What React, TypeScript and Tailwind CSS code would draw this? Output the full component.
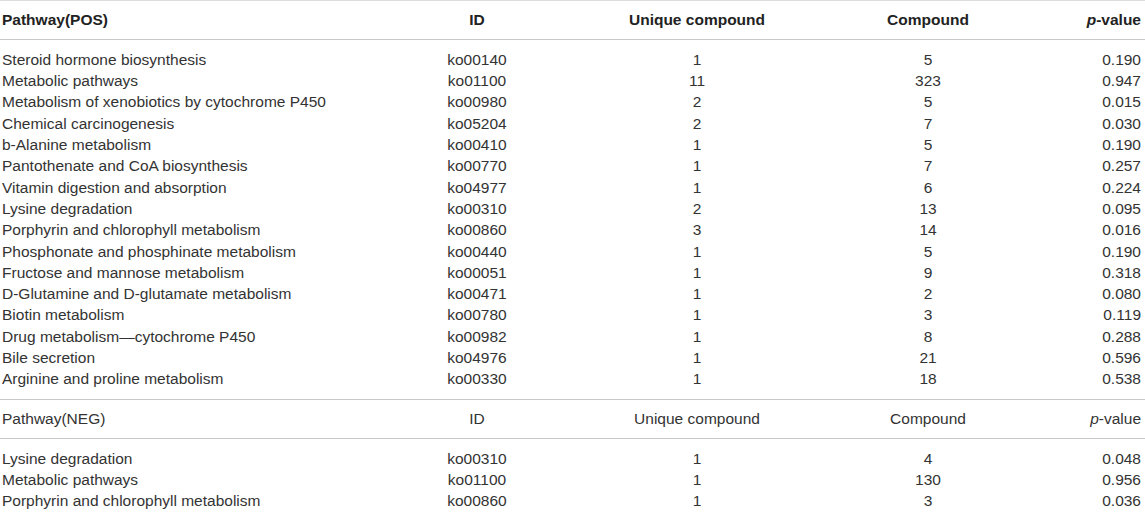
import React from 'react';

type Row = [string, string, string, string, string];

const pos: Row[] = [
  ['Steroid hormone biosynthesis', 'ko00140', '1', '5', '0.190'],
  ['Metabolic pathways', 'ko01100', '11', '323', '0.947'],
  ['Metabolism of xenobiotics by cytochrome P450', 'ko00980', '2', '5', '0.015'],
  ['Chemical carcinogenesis', 'ko05204', '2', '7', '0.030'],
  ['b-Alanine metabolism', 'ko00410', '1', '5', '0.190'],
  ['Pantothenate and CoA biosynthesis', 'ko00770', '1', '7', '0.257'],
  ['Vitamin digestion and absorption', 'ko04977', '1', '6', '0.224'],
  ['Lysine degradation', 'ko00310', '2', '13', '0.095'],
  ['Porphyrin and chlorophyll metabolism', 'ko00860', '3', '14', '0.016'],
  ['Phosphonate and phosphinate metabolism', 'ko00440', '1', '5', '0.190'],
  ['Fructose and mannose metabolism', 'ko00051', '1', '9', '0.318'],
  ['D-Glutamine and D-glutamate metabolism', 'ko00471', '1', '2', '0.080'],
  ['Biotin metabolism', 'ko00780', '1', '3', '0.119'],
  ['Drug metabolism\u2014cytochrome P450', 'ko00982', '1', '8', '0.288'],
  ['Bile secretion', 'ko04976', '1', '21', '0.596'],
  ['Arginine and proline metabolism', 'ko00330', '1', '18', '0.538'],
];

const neg: Row[] = [
  ['Lysine degradation', 'ko00310', '1', '4', '0.048'],
  ['Metabolic pathways', 'ko01100', '1', '130', '0.956'],
  ['Porphyrin and chlorophyll metabolism', 'ko00860', '1', '3', '0.036'],
];

// fixed column widths so the centres line up with the printed table
const cols = 'grid grid-cols-[400px_154px_286px_176px_129px]';

const Header: React.FC<{ label: string; bold?: boolean }> = ({ label, bold }) => (
  <div
    className={`${cols} h-[39px] items-center border-b-[1.5px] border-[#c9c9c9] ${
      bold ? 'font-bold text-[#222]' : ''
    }`}>
    <div className="pl-[2px]">{label}</div>
    <div className="text-center">ID</div>
    <div className="text-center">Unique compound</div>
    <div className="text-center">Compound</div>
    <div className="text-right pr-[4px]">
      <i>p</i>-value
    </div>
  </div>
);

const Body: React.FC<{ rows: Row[]; last?: boolean }> = ({ rows, last }) => (
  <div className={`py-[9px] ${last ? '' : 'border-b-[1.5px] border-[#c9c9c9]'}`}>
    {rows.map((r) => (
      <div key={r[0] + r[1]} className={`${cols} h-[21.3px] items-center`}>
        <div className="pl-[2px] whitespace-nowrap">{r[0]}</div>
        <div className="text-center">{r[1]}</div>
        <div className="text-center">{r[2]}</div>
        <div className="text-center">{r[3]}</div>
        <div className="text-right pr-[4px]">{r[4]}</div>
      </div>
    ))}
  </div>
);

export default function App() {
  return (
    <div className="w-[1145px] h-[519px] bg-white overflow-hidden text-[#333] text-[15.5px] leading-none font-['Liberation_Sans',Arial,sans-serif]">
      <div className="border-t border-[#dcdcdc]">
        <Header label="Pathway(POS)" bold />
        <Body rows={pos} />
        <Header label="Pathway(NEG)" />
        <Body rows={neg} last />
      </div>
    </div>
  );
}
